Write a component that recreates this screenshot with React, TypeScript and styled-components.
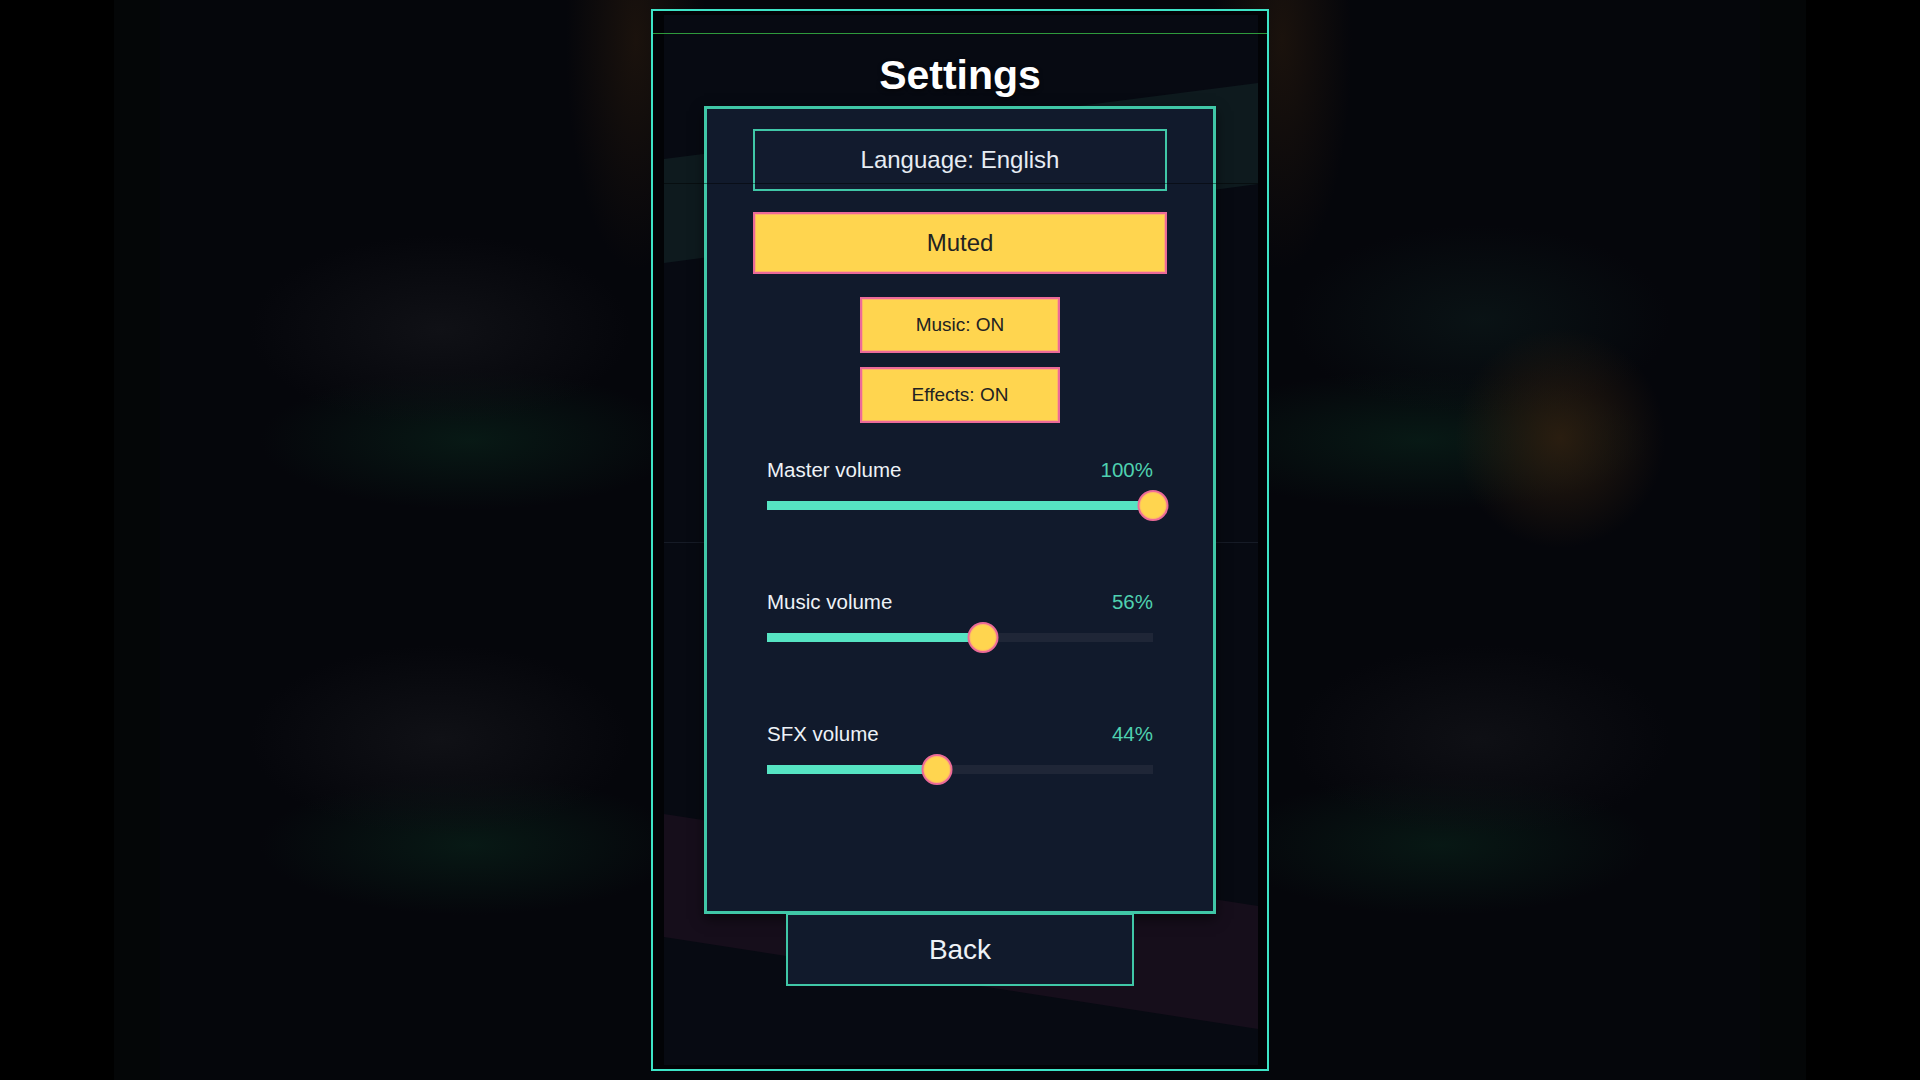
import React from 'react';
import styled, {createGlobalStyle} from 'styled-components';

const colors = {
  frame: '#3de4c6',
  teal: '#40c7a7',
  panel: '#111a2c',
  yellow: '#ffd54f',
  pink: '#ec6a98',
  mint: '#56e4c3',
  trackOff: '#1f2637',
  value: '#4fd1b0',
  text: '#eef2f7',
};

const GlobalStyle = createGlobalStyle`
  html, body {
    margin: 0;
    padding: 0;
    background: #020306;
  }
  body {
    font-family: "Liberation Sans", Arial, sans-serif;
  }
  * {
    box-sizing: border-box;
  }
`;

const Page = styled.div`
  width: 100vw;
  height: 100vh;
  overflow: hidden;
  display: flex;
  align-items: center;
  justify-content: center;
  background:
    radial-gradient(ellipse 70px 230px at 636px 40px, rgba(44, 28, 14, 0.55), rgba(44, 28, 14, 0) 100%),
    radial-gradient(ellipse 70px 230px at 1282px 40px, rgba(44, 28, 14, 0.55), rgba(44, 28, 14, 0) 100%),
    radial-gradient(ellipse 105px 110px at 1560px 438px, rgba(48, 32, 16, 0.85), rgba(48, 32, 16, 0) 100%),
    radial-gradient(ellipse 190px 95px at 440px 330px, rgba(17, 18, 23, 0.9), rgba(17, 18, 23, 0) 100%),
    radial-gradient(ellipse 210px 70px at 470px 440px, rgba(8, 27, 22, 0.9), rgba(8, 27, 22, 0) 100%),
    radial-gradient(ellipse 190px 95px at 440px 740px, rgba(17, 18, 23, 0.9), rgba(17, 18, 23, 0) 100%),
    radial-gradient(ellipse 210px 70px at 470px 845px, rgba(8, 27, 22, 0.9), rgba(8, 27, 22, 0) 100%),
    radial-gradient(ellipse 190px 95px at 1480px 320px, rgba(10, 20, 22, 0.9), rgba(10, 20, 22, 0) 100%),
    radial-gradient(ellipse 230px 70px at 1420px 440px, rgba(8, 27, 22, 0.9), rgba(8, 27, 22, 0) 100%),
    radial-gradient(ellipse 190px 95px at 1480px 740px, rgba(17, 18, 23, 0.8), rgba(17, 18, 23, 0) 100%),
    radial-gradient(ellipse 210px 70px at 1440px 845px, rgba(8, 27, 22, 0.85), rgba(8, 27, 22, 0) 100%),
    linear-gradient(
      90deg,
      #000 0,
      #000 114px,
      #040607 114px,
      #040607 160px,
      #05060b 160px,
      #05060b 1760px,
      #040607 1760px,
      #040607 1806px,
      #000 1806px
    );
`;

const Frame = styled.div`
  position: relative;
  width: 618px;
  height: 1062px;
  border: 2px solid ${colors.frame};
  background: #020306;
  display: flex;
  flex-direction: column;
  align-items: center;
`;

const Backdrop = styled.svg`
  position: absolute;
  inset: 0;
  width: 100%;
  height: 100%;
  z-index: 0;
`;

const ScanLine = styled.div`
  position: absolute;
  top: 172px;
  left: 11px;
  right: 9px;
  height: 1px;
  background: rgba(0, 0, 0, 0.45);
  z-index: 3;
`;

const Title = styled.h1`
  position: relative;
  z-index: 1;
  margin: 40px 0 0;
  font-size: 41px;
  line-height: 48px;
  font-weight: 700;
  color: #ffffff;
  text-shadow: 0 2px 4px rgba(0, 0, 0, 0.5);
`;

const Panel = styled.section`
  position: relative;
  z-index: 1;
  width: 512px;
  height: 808px;
  margin-top: 7px;
  padding-top: 20px;
  border: 3px solid ${colors.teal};
  background: ${colors.panel};
  box-shadow: 0 5px 12px rgba(0, 0, 0, 0.5);
  display: flex;
  flex-direction: column;
  align-items: center;
`;

const ButtonGroup = styled.div<{$gap: number; $top?: number}>`
  display: flex;
  flex-direction: column;
  align-items: center;
  gap: ${(p) => p.$gap}px;
  margin-top: ${(p) => p.$top ?? 0}px;
`;

const OutlineButton = styled.button`
  width: 414px;
  height: 62px;
  padding: 0;
  border: 2px solid ${colors.teal};
  background: #121b2e;
  color: #e6ecf3;
  font-family: inherit;
  font-size: 24px;
  cursor: pointer;
`;

const YellowButton = styled.button<{$wide?: boolean}>`
  width: ${(p) => (p.$wide ? 414 : 200)}px;
  height: ${(p) => (p.$wide ? 62 : 56)}px;
  padding: 0;
  border: 2px solid ${colors.pink};
  box-shadow: inset 0 0 0 1px rgba(255, 150, 130, 0.55);
  background: ${colors.yellow};
  color: #222222;
  font-family: inherit;
  font-size: ${(p) => (p.$wide ? 24 : 19)}px;
  cursor: pointer;
`;

const SliderList = styled.div`
  width: 386px;
  margin-top: 35px;
  display: flex;
  flex-direction: column;
  gap: 69px;
`;

const SliderHeader = styled.div`
  display: flex;
  justify-content: space-between;
  align-items: center;
  font-size: 20.5px;
  line-height: 24px;
`;

const SliderLabel = styled.span`
  color: ${colors.text};
`;

const SliderValue = styled.span`
  color: ${colors.value};
`;

const TrackRow = styled.div`
  position: relative;
  margin-top: 8px;
  height: 31px;
  display: flex;
  align-items: center;
`;

const Track = styled.div`
  width: 100%;
  height: 9px;
  background: ${colors.trackOff};
`;

const TrackFill = styled.div`
  height: 100%;
  background: ${colors.mint};
`;

const Thumb = styled.div`
  position: absolute;
  top: 0;
  width: 31px;
  height: 31px;
  border-radius: 50%;
  border: 2.5px solid ${colors.pink};
  background: ${colors.yellow};
  box-shadow: inset 0 0 0 1px rgba(255, 160, 130, 0.5);
  transform: translateX(-50%);
`;

const BackButton = styled.button`
  position: relative;
  z-index: 2;
  width: 348px;
  height: 73px;
  margin-top: -1px;
  padding: 0;
  border: 2px solid ${colors.teal};
  background: ${colors.panel};
  color: ${colors.text};
  font-family: inherit;
  font-size: 28px;
  cursor: pointer;
`;

interface SliderProps {
  label: string;
  value: number;
}

const VolumeSlider = ({label, value}: SliderProps) => (
  <div>
    <SliderHeader>
      <SliderLabel>{label}</SliderLabel>
      <SliderValue>{value}%</SliderValue>
    </SliderHeader>
    <TrackRow>
      <Track>
        <TrackFill style={{width: `${value}%`}} />
      </Track>
      <Thumb style={{left: `${value}%`}} />
    </TrackRow>
  </div>
);

// background art inside the frame: lighter inner plate, slanted bands, guide lines
const FrameArt = () => (
  <Backdrop viewBox="0 0 614 1058" preserveAspectRatio="none">
    <rect x="11" y="4" width="594" height="1050" fill="#070a12" />
    <polygon points="11,148 605,72 605,173 11,252" fill="#0e1a1e" />
    <polygon points="11,803 605,895 605,1018 11,926" fill="#160e1b" />
    <line x1="0" y1="22.5" x2="614" y2="22.5" stroke="#2e9a3c" strokeWidth="1.2" />
    <line x1="11" y1="531.5" x2="605" y2="531.5" stroke="#161b26" strokeWidth="1" />
  </Backdrop>
);

const App = () => {
  const sliders = [
    {label: 'Master volume', value: 100},
    {label: 'Music volume', value: 56},
    {label: 'SFX volume', value: 44},
  ];

  return (
    <Page>
      <GlobalStyle />
      <Frame>
        <FrameArt />
        <ScanLine />
        <Title>Settings</Title>
        <Panel>
          <ButtonGroup $gap={21}>
            <OutlineButton>Language: English</OutlineButton>
            <YellowButton $wide>Muted</YellowButton>
          </ButtonGroup>
          <ButtonGroup $gap={14} $top={23}>
            <YellowButton>Music: ON</YellowButton>
            <YellowButton>Effects: ON</YellowButton>
          </ButtonGroup>
          <SliderList>
            {sliders.map((s) => (
              <VolumeSlider key={s.label} label={s.label} value={s.value} />
            ))}
          </SliderList>
        </Panel>
        <BackButton>Back</BackButton>
      </Frame>
    </Page>
  );
};

export default App;
